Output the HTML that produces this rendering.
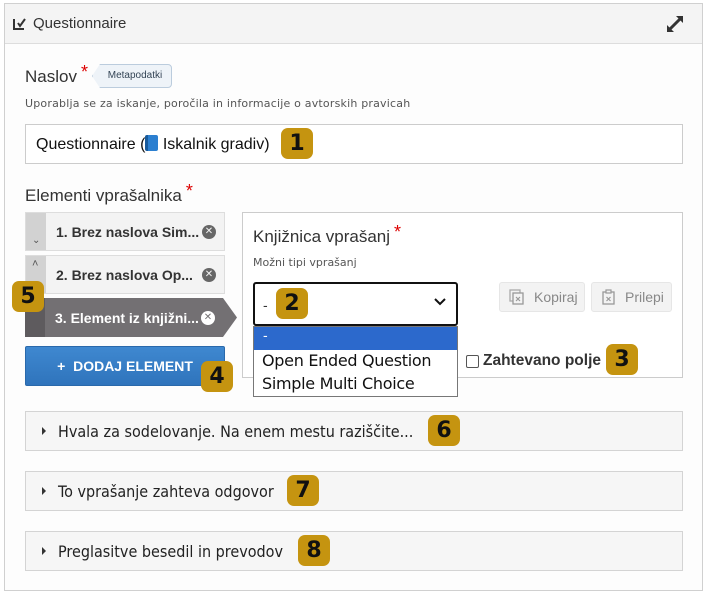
<!DOCTYPE html>
<html><head><meta charset="utf-8"><style>
*{box-sizing:border-box;margin:0;padding:0}
body{width:707px;height:594px;background:#fff;font-family:"Liberation Sans","DejaVu Sans",sans-serif;position:relative;overflow:hidden;color:#333}
.a{position:absolute}
.badge{position:absolute;width:32px;height:31px;background:#c59410;border-radius:7px;color:#111;font-weight:bold;font-size:22px;line-height:31px;text-align:center;font-family:"DejaVu Sans","Liberation Sans",sans-serif}
.item{position:absolute;left:25px;width:200px;height:39px;background:#f3f3f3;border:1px solid #ddd}
.item .h{position:absolute;left:0;top:0;width:20px;height:100%;background:#d2d2d2}
.item .t{position:absolute;left:30px;top:11px;font-size:14px;font-weight:bold;color:#333;font-family:"Liberation Sans",sans-serif}
.x{position:absolute;left:176px;top:12px;width:14px;height:14px;border-radius:50%;background:#666;color:#f3f3f3;font-size:10px;line-height:14px;text-align:center;font-weight:bold}
.acc{position:absolute;left:25px;width:658px;height:40px;background:#f6f6f6;border:1px solid #d4d4d4}
.acc span{position:absolute;left:32px;top:10px;font-size:16px;color:#222;font-family:"Liberation Sans Narrow","DejaVu Sans Condensed",sans-serif}
.acc i{position:absolute;left:16px;top:15px;width:0;height:0;border-left:4px solid #333;border-top:4px solid transparent;border-bottom:4px solid transparent}
.btn{position:absolute;top:282px;height:30px;background:#f3f3f3;border:1px solid #e6e6e6;border-radius:3px;color:#888;font-size:14px;line-height:28px}
.st{color:#d00;font-size:18px;position:relative;top:-4px;margin-left:4px}
</style></head><body>
<div class="a" style="left:4px;top:3px;width:699px;height:588px;border:1px solid #d0d0d0;background:#fdfdfd"></div>
<div class="a" style="left:5px;top:4px;width:697px;height:40px;background:#f4f4f4;border-bottom:1px solid #ddd"></div>
<svg class="a" style="left:13px;top:17px" width="16" height="14" viewBox="0 0 16 14"><path d="M1 2V12H11" fill="none" stroke="#333" stroke-width="2"/><path d="M5 6L7 9L12 2" fill="none" stroke="#333" stroke-width="2"/></svg>
<div class="a" style="left:33px;top:15px;font-size:15px;color:#333">Questionnaire</div>
<svg class="a" style="left:664px;top:13px" width="22" height="22" viewBox="0 0 22 22"><path d="M4 18L18 4" stroke="#333" stroke-width="3"/><path d="M12 3H19V10Z M3 12V19H10Z" fill="#333"/></svg>

<div class="a" style="left:25px;top:66px;font-size:17px;color:#333">Naslov<span class="st">*</span></div>
<div class="a" style="left:92px;top:64px;width:80px;height:24px;border:1px solid #bcd;border-radius:4px;background:#eef3f8;font-size:10px;line-height:22px;text-align:center;color:#345;padding-left:6px;clip-path:polygon(8px 0,100% 0,100% 100%,8px 100%,0 50%)">Metapodatki</div>
<div class="a" style="left:25px;top:97px;font-size:11px;color:#555;letter-spacing:.2px;font-family:'DejaVu Sans',sans-serif">Uporablja se za iskanje, poročila in informacije o avtorskih pravicah</div>
<div class="a" style="left:25px;top:124px;width:658px;height:40px;border:1px solid #ccc;background:#fff"></div>
<div class="a" style="left:36px;top:135px;font-size:16px;color:#111">Questionnaire (<span style="display:inline-block;width:13px;height:16px;background:#2b7fd0;border-radius:2px;vertical-align:-2px;border-left:3px solid #175a9c"></span> Iskalnik gradiv)</div>
<div class="badge" style="left:281px;top:128px">1</div>

<div class="a" style="left:25px;top:185px;font-size:17px;color:#333">Elementi vprašalnika<span class="st">*</span></div>
<div class="item" style="top:212px"><div class="h"></div><div class="a" style="left:6px;top:22px;font-size:10px;color:#555">⌄</div><div class="t">1. Brez naslova Sim...</div><div class="x">✕</div></div>
<div class="item" style="top:255px"><div class="h"></div><div class="a" style="left:6px;top:2px;font-size:11px;color:#555">˄</div><div class="t">2. Brez naslova Op...</div><div class="x">✕</div></div>
<div class="a" style="left:25px;top:298px;width:212px;height:39px;background:#737073;clip-path:polygon(0 0,198px 0,212px 50%,198px 100%,0 100%)"></div>
<div class="a" style="left:25px;top:298px;width:20px;height:39px;background:#5e5b5e"></div>
<div class="a" style="left:55px;top:310px;font-size:14px;font-weight:bold;color:#fff">3. Element iz knjižni...</div>
<div class="a x" style="left:201px;top:311px;background:#fff;color:#737073">✕</div>
<div class="badge" style="left:12px;top:281px">5</div>
<div class="a" style="left:25px;top:346px;width:200px;height:40px;background:linear-gradient(#3f88d0,#2f74bc);border:1px solid #2a69ab;border-radius:2px;color:#fff;font-weight:bold;font-size:14px;line-height:38px;text-align:center">+&nbsp; DODAJ ELEMENT</div>
<div class="badge" style="left:201px;top:361px">4</div>

<div class="a" style="left:242px;top:212px;width:441px;height:166px;border:1px solid #ccc;background:#fff"></div>
<div class="a" style="left:253px;top:226px;font-size:17px;color:#333">Knjižnica vprašanj<span class="st">*</span></div>
<div class="a" style="left:253px;top:256px;font-size:11px;color:#555;font-family:'DejaVu Sans',sans-serif">Možni tipi vprašanj</div>
<div class="a" style="left:253px;top:282px;width:205px;height:44px;border:2px solid #111;border-radius:3px;background:#fff"></div>
<div class="a" style="left:263px;top:297px;font-size:14px">-</div>
<svg class="a" style="left:434px;top:298px" width="12" height="8" viewBox="0 0 12 8"><path d="M1 1L6 6L11 1" fill="none" stroke="#111" stroke-width="2"/></svg>
<div class="badge" style="left:276px;top:288px">2</div>
<div class="a" style="left:253px;top:326px;width:205px;height:71px;border:1px solid #777;background:#fff"></div>
<div class="a" style="left:254px;top:327px;width:203px;height:23px;background:#2c69cc;color:#fff;font-size:14px;padding-left:9px">-</div>
<div class="a" style="left:262px;top:351px;font-size:16px;color:#111;font-family:'DejaVu Sans',sans-serif;letter-spacing:-.3px">Open Ended Question</div>
<div class="a" style="left:262px;top:374px;font-size:16px;color:#111;font-family:'DejaVu Sans',sans-serif;letter-spacing:-.3px">Simple Multi Choice</div>
<div class="btn" style="left:499px;width:86px;padding-left:34px"><svg class="a" style="left:9px;top:6px" width="16" height="16" viewBox="0 0 16 16"><rect x="1" y="1" width="10" height="11" fill="none" stroke="#aaa" stroke-width="1.3"/><rect x="4" y="4" width="10" height="11" fill="#f3f3f3" stroke="#999" stroke-width="1.3"/><path d="M7 8L11 12M11 8L7 12" stroke="#999" stroke-width="1.2"/></svg>Kopiraj</div>
<div class="btn" style="left:591px;width:81px;padding-left:33px"><svg class="a" style="left:9px;top:6px" width="16" height="16" viewBox="0 0 16 16"><rect x="2" y="3" width="11" height="12" fill="none" stroke="#999" stroke-width="1.3"/><rect x="5" y="1" width="5" height="3" fill="#f3f3f3" stroke="#999" stroke-width="1.2"/><path d="M5.5 8L9.5 12M9.5 8L5.5 12" stroke="#999" stroke-width="1.2"/></svg>Prilepi</div>
<div class="a" style="left:466px;top:355px;width:13px;height:13px;border:1px solid #555;border-radius:2px;background:#fff"></div>
<div class="a" style="left:483px;top:352px;font-size:15.5px;color:#333;font-weight:bold">Zahtevano polje</div>
<div class="badge" style="left:606px;top:344px">3</div>

<div class="acc" style="top:411px"><i></i><span>Hvala za sodelovanje. Na enem mestu raziščite...</span></div>
<div class="badge" style="left:428px;top:415px">6</div>
<div class="acc" style="top:471px"><i></i><span>To vprašanje zahteva odgovor</span></div>
<div class="badge" style="left:287px;top:475px">7</div>
<div class="acc" style="top:531px"><i></i><span>Preglasitve besedil in prevodov</span></div>
<div class="badge" style="left:298px;top:535px">8</div>
</body></html>
